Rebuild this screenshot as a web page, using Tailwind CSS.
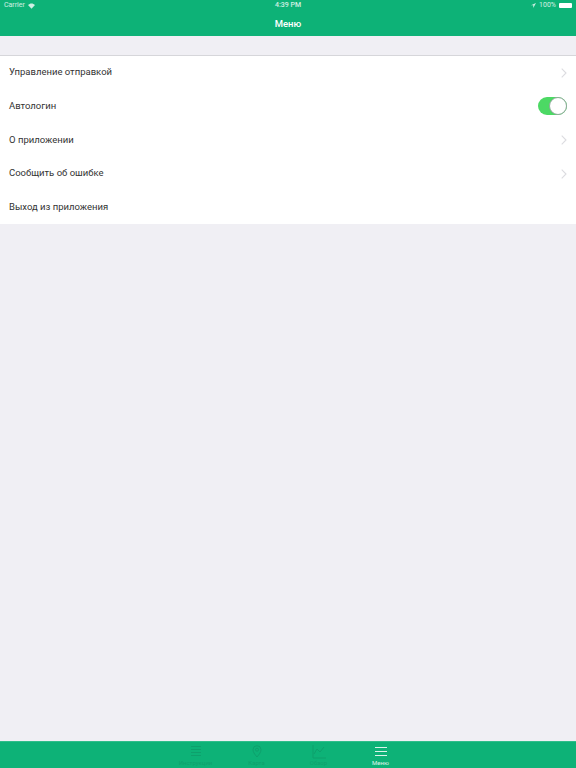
<!DOCTYPE html>
<html lang="ru">
<head>
    <meta charset="UTF-8">
    <meta name="viewport" content="width=device-width, initial-scale=1.0">
    <title>Меню</title>
    <script src="https://cdn.jsdelivr.net/npm/@tailwindcss/browser@4"></script>
</head>
<body class="bg-[#f0eff4] font-['Roboto',sans-serif]">
    <div class="flex h-[768px] w-[576px] flex-col overflow-hidden">
        <header class="h-[36px] shrink-0 bg-[#0db277] text-white">
            <div class="relative flex h-[11px] items-center justify-between px-[4px] text-[7px] leading-none text-white/80">
                <div class="flex items-center gap-[3px]">
                    <span>Carrier</span>
                    <svg width="7" height="6" viewBox="0 0 14 11" fill="currentColor"><path d="M7 11 0 3.5C4-.7 10-.7 14 3.5Z"/></svg>
                </div>
                <span class="absolute left-[275px] top-[2px] font-medium">4:39 PM</span>
                <div class="flex items-center gap-[3px]">
                    <svg width="5" height="5" viewBox="0 0 10 10" fill="currentColor"><path d="M10 0 0 4.5h4.5V10Z"/></svg>
                    <span>100%</span>
                    <span class="h-[5px] w-[13px] rounded-[1px] bg-white"></span>
                </div>
            </div>
            <h1 class="mt-[1px] text-center text-[9.5px] leading-[24px] font-medium">Меню</h1>
        </header>

        <div class="h-[20px] shrink-0 border-b border-[#d6d6da]"></div>

        <ul class="shrink-0 bg-white text-[9.5px] text-[#333333]">
            <li class="flex h-[33px] items-center justify-between px-[9px]">
                <span>Управление отправкой</span>
                <svg width="6" height="10" viewBox="0 0 6 10" fill="none" stroke="#dcdce0" stroke-width="1.1"><path d="m.7.7 4.3 4.3L.7 9.3"/></svg>
            </li>
            <li class="flex h-[34px] items-center justify-between px-[9px]">
                <span>Автологин</span>
                <span class="flex h-[18px] w-[29px] justify-end rounded-full bg-[#4cd964]">
                    <span class="h-[18px] w-[18px] rounded-full border border-[#8fa89a] bg-white"></span>
                </span>
            </li>
            <li class="flex h-[34px] items-center justify-between px-[9px]">
                <span>О приложении</span>
                <svg width="6" height="10" viewBox="0 0 6 10" fill="none" stroke="#dcdce0" stroke-width="1.1"><path d="m.7.7 4.3 4.3L.7 9.3"/></svg>
            </li>
            <li class="flex h-[33px] items-center justify-between px-[9px]">
                <span>Сообщить об ошибке</span>
                <svg width="6" height="10" viewBox="0 0 6 10" fill="none" stroke="#dcdce0" stroke-width="1.1"><path d="m.7.7 4.3 4.3L.7 9.3"/></svg>
            </li>
            <li class="flex h-[34px] items-center pl-[9px]">
                <span>Выход из приложения</span>
            </li>
        </ul>

        <div class="flex-1"></div>

        <nav class="flex h-[27px] shrink-0 justify-center border-t border-[#2fbd8a] bg-[#0db277] text-[6px] leading-none">
            <a class="flex w-[61px] flex-col items-center pt-[3px] text-[#0ea06c]">
                <svg class="shrink-0" width="12" height="13" viewBox="0 0 12 13" fill="none" stroke="currentColor"><path d="M1 1.500h10M1 4.500h10M1 7.500h10M1 10.500h10"/></svg>
                <span class="mt-[2px]">Инструкции</span>
            </a>
            <a class="flex w-[61px] flex-col items-center pt-[3px] text-[#0ea06c]">
                <svg class="shrink-0" width="10" height="13" viewBox="0 0 10 13" fill="none" stroke="currentColor"><path d="M5 12C2.500 9 1 7 1 4.700a4 4 0 0 1 8 0C9 7 7.500 9 5 12Z"/><circle cx="5" cy="4.700" r="1.500"/></svg>
                <span class="mt-[2px]">Карта</span>
            </a>
            <a class="flex w-[63px] flex-col items-center pt-[3px] text-[#0ea06c]">
                <svg class="shrink-0" width="14" height="14" viewBox="0 0 14 14" fill="none" stroke="currentColor"><path d="M1 0v13h13M2 9l3-5 3 3 4-5"/></svg>
                <span class="mt-[1px]">Обзор</span>
            </a>
            <a class="flex w-[61px] flex-col items-center pt-[4px] text-white/85">
                <svg class="shrink-0" width="12" height="12" viewBox="0 0 12 12" fill="none" stroke="currentColor"><path d="M0 1.500h12M0 5.500h12M0 9.500h12"/></svg>
                <span class="mt-[2px]">Меню</span>
            </a>
        </nav>
    </div>
</body>
</html>
